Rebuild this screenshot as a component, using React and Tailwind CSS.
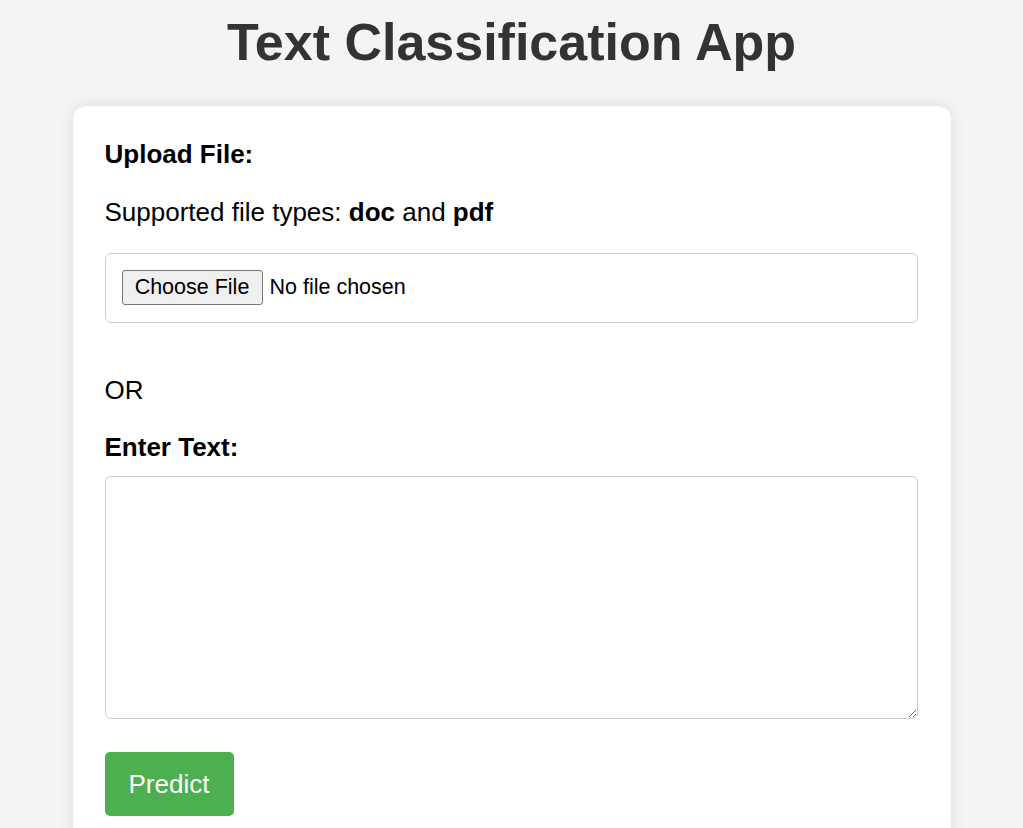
import { useState } from 'react'

export default function App() {
  const [text, setText] = useState('')

  return (
    <div className="min-h-screen bg-[#f4f4f4] pb-10" style={{ fontFamily: '"Liberation Sans", Arial, sans-serif' }}>
      <h1 className="pt-[13px] text-center text-[52px] font-bold leading-[59px] text-[#333]">
        Text Classification App
      </h1>

      {/* Card */}
      <div className="mx-auto mt-[34px] w-[878px] rounded-[13px] bg-white pl-[32px] pr-[33px] pt-[34px] pb-[32px] shadow-[0_0_16px_rgba(0,0,0,0.1)]">
        <label className="block text-[26px] font-bold leading-[29px] text-black">Upload File:</label>
        <p className="mt-[29px] text-[26px] leading-[29px] text-black">
          Supported file types: <b>doc</b> and <b>pdf</b>
        </p>

        <div className="mt-[26px] flex h-[70px] items-start rounded-[6px] border border-[#ccc] p-[16px]">
          <button className="flex h-[35px] w-[141px] items-center justify-center rounded-[3px] border border-[#767676] bg-[#efefef] text-[21.5px] text-black">
            Choose File
          </button>
          <span className="ml-[7px] flex h-[35px] items-center text-[21.5px] text-black">No file chosen</span>
        </div>

        <p className="mt-[53px] text-[26px] leading-[29px] text-black">OR</p>

        <label className="mt-[28px] block text-[26px] font-bold leading-[29px] text-black">Enter Text:</label>
        <textarea
          value={text}
          onChange={e => setText(e.target.value)}
          className="mt-[14px] block h-[243px] w-full rounded-[6px] border border-[#ccc] p-[16px] text-[21.5px]"
        />

        <button className="mt-[33px] flex h-[64px] w-[129px] items-center justify-center rounded-[5px] bg-[#4caf50] text-[26px] text-white">
          Predict
        </button>
      </div>
    </div>
  )
}
